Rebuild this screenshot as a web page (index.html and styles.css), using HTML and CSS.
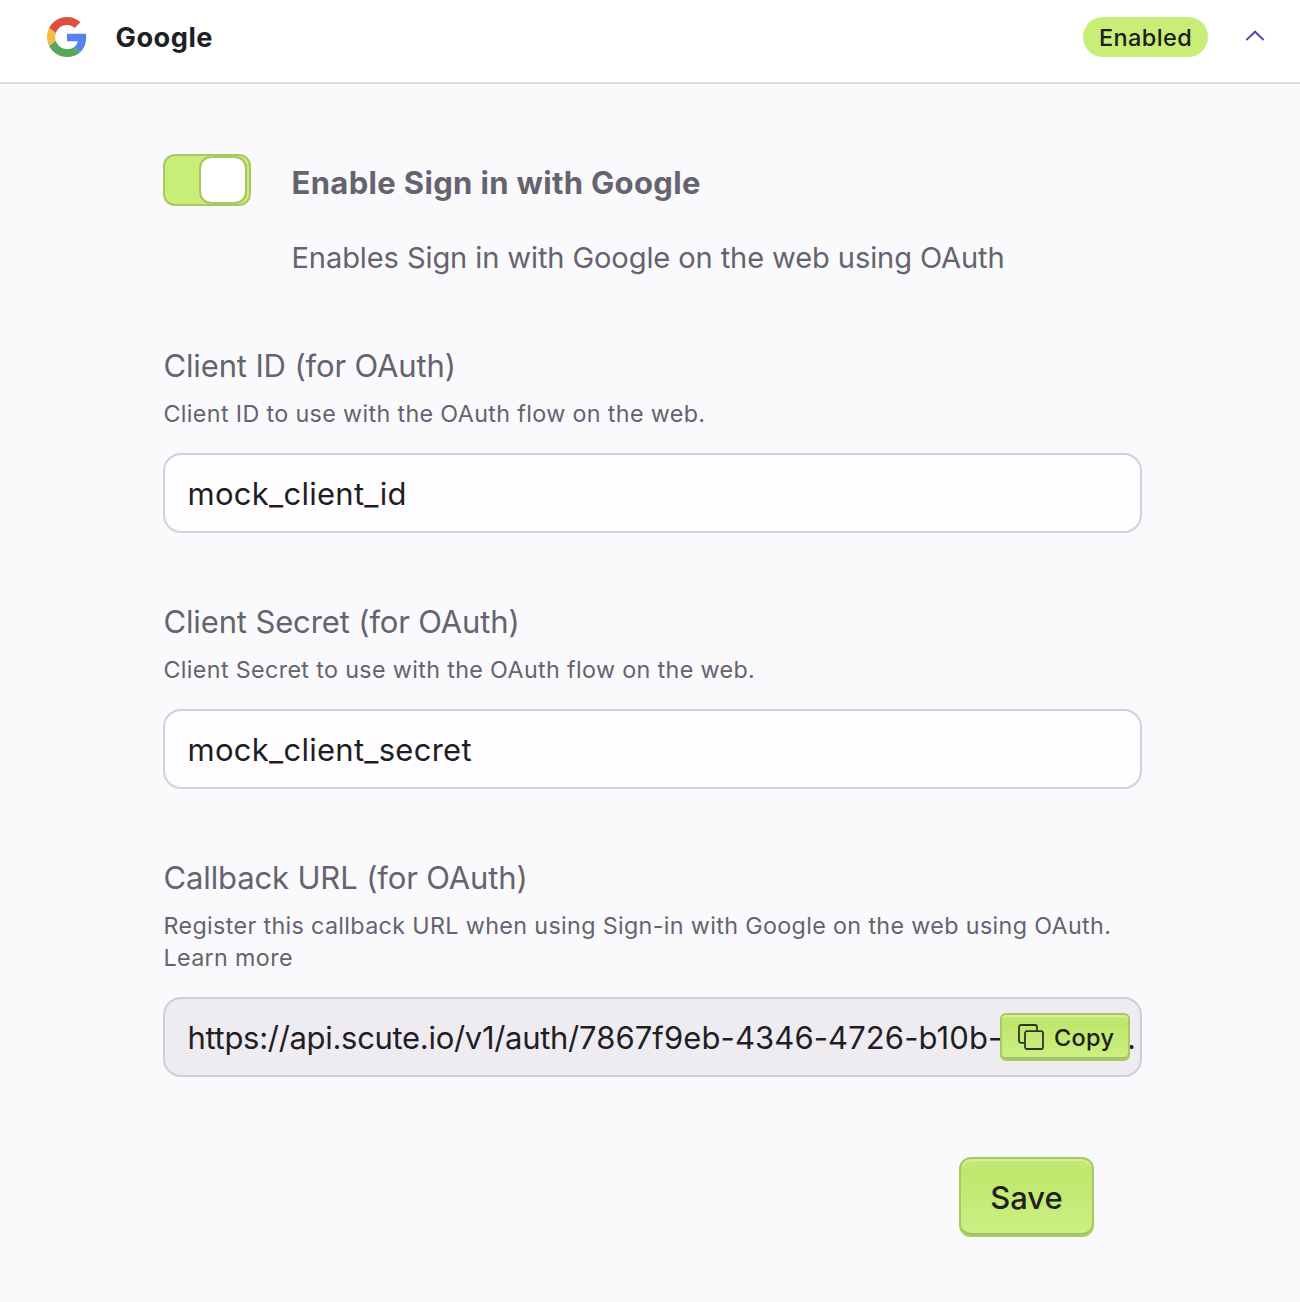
FILE: index.html
```html
<!DOCTYPE html>
<html lang="en">
<head>
<meta charset="utf-8">
<title>Google sign in settings</title>
<link rel="stylesheet" href="styles.css">
</head>
<body>
<header class="header">
  <svg class="logo" viewBox="0 0 48 48" aria-hidden="true">
    <path fill="#db5040" d="M24 9.5c3.54 0 6.71 1.22 9.21 3.6l6.85-6.85C35.9 2.38 30.47 0 24 0 14.62 0 6.51 5.38 2.56 13.22l7.98 6.19C12.43 13.72 17.74 9.5 24 9.5z"/>
    <path fill="#5384ee" d="M46.98 24.55c0-1.57-.15-3.09-.38-4.55H24v9.02h12.94c-.58 2.96-2.26 5.48-4.78 7.18l7.73 6c4.51-4.18 7.09-10.36 7.09-17.65z"/>
    <path fill="#f2bd42" d="M10.53 28.59c-.48-1.45-.76-2.99-.76-4.59s.27-3.14.76-4.59l-7.98-6.19C.92 16.46 0 20.12 0 24c0 3.88.92 7.54 2.56 10.78l7.97-6.19z"/>
    <path fill="#58a55c" d="M24 48c6.48 0 11.93-2.13 15.89-5.81l-7.73-6c-2.15 1.45-4.92 2.3-8.16 2.3-6.26 0-11.57-4.22-13.47-9.91l-7.98 6.19C6.51 42.62 14.62 48 24 48z"/>
  </svg>
  <h1 class="provider">Google</h1>
  <span class="badge">Enabled</span>
  <svg class="chevron" viewBox="0 0 20 12" aria-hidden="true"><path d="M1.400 10 10 1.700l8.600 8.300"/></svg>
</header>
<main class="form">
  <div class="enable">
    <span class="switch"><span class="thumb"></span></span>
    <div class="enable-text">
      <h2 class="enable-title">Enable Sign in with Google</h2>
      <p class="enable-desc">Enables Sign in with Google on the web using OAuth</p>
    </div>
  </div>
  <section class="field">
    <div class="label">Client ID (for OAuth)</div>
    <p class="hint">Client ID to use with the OAuth flow on the web.</p>
    <div class="input"><span class="value">mock_client_id</span></div>
  </section>
  <section class="field">
    <div class="label">Client Secret (for OAuth)</div>
    <p class="hint">Client Secret to use with the OAuth flow on the web.</p>
    <div class="input"><span class="value">mock_client_secret</span></div>
  </section>
  <section class="field">
    <div class="label">Callback URL (for OAuth)</div>
    <p class="hint">Register this callback URL when using Sign-in with Google on the web using OAuth.<br>Learn more</p>
    <div class="input readonly">
      <span class="url"><span class="url-base">https://api.scute.io/v1/auth/</span>7867f9eb-4346-4726-b10b-</span>
      <button class="button copy" type="button">
        <svg class="copy-icon" viewBox="0 0 26 26" aria-hidden="true"><path d="M6.500 18.800H3a2 2 0 0 1-2-2V3a2 2 0 0 1 2-2h14a2 2 0 0 1 2 2v3.500"/><rect x="7" y="7.200" width="18" height="17.800" rx="2"/></svg>
        <span>Copy</span>
      </button>
      <span class="tail">.</span>
    </div>
  </section>
  <div class="actions"><button class="button save" type="button">Save</button></div>
</main>
</body>
</html>
```

FILE: styles.css
```css
* { box-sizing: border-box; margin: 0; padding: 0; }
body {
  background: #fafafd;
  color: #1f1e25;
  font-family: Inter, "Liberation Sans", sans-serif;
  font-size: 31px;
  min-height: 1302px;
}
.header {
  display: flex;
  align-items: center;
  height: 84px;
  padding: 0 35px 8px 47px;
  background: #fff;
  border-bottom: 2px solid #dadae1;
}
.logo { width: 40px; height: 40px; }
.provider { margin: 1px 0 0 28.500px; font-size: 27.200px; line-height: 40px; font-weight: 700; letter-spacing: 0.5px; }
.badge {
  display: flex;
  justify-content: center;
  width: 125px;
  height: 40px;
  margin-left: auto;
  border-radius: 20px;
  background: #c8ee77;
  color: #1c2018;
  font-size: 23.500px;
  font-weight: 450;
  line-height: 41px;
  letter-spacing: 0.4px;
}
.chevron { width: 20px; height: 12px; margin: 0 0 3px 37px; fill: none; stroke: #5a47b8; stroke-width: 2; }
.form { width: 979px; margin-left: 163px; padding-top: 70px; }
.enable { display: flex; gap: 40.500px; height: 192px; color: #65636d; }
.switch {
  display: flex;
  justify-content: flex-end;
  flex: none;
  width: 88px;
  height: 52px;
  padding-right: 2px;
  border: 2px solid #a8c864;
  border-radius: 12px;
  background: #c8ee77;
}
.thumb {
  width: 48px;
  height: 48px;
  border: 2px solid #a8c864;
  border-radius: 12px;
  background: #fff;
  background-clip: padding-box;
}
.enable-title { margin-top: 9px; font-size: 31px; font-weight: 700; line-height: 40px; letter-spacing: 0.34px; white-space: nowrap; }
.enable-desc { margin-top: 35px; font-size: 29.100px; line-height: 40px; letter-spacing: -0.12px; white-space: nowrap; }
.field { padding-bottom: 69px; }
.label { padding-left: 0.5px; color: #65636d; line-height: 40px; letter-spacing: -0.14px; }
.hint { margin: 12px 0 23px 0.5px; color: #65636d; font-size: 23.300px; line-height: 32px; letter-spacing: 0.35px; white-space: nowrap; }
.input {
  display: flex;
  align-items: center;
  position: relative;
  height: 80px;
  padding: 0 22px 0 22.500px;
  border: 2px solid #d2d1da;
  border-radius: 18px;
  background: #fffdff;
  white-space: nowrap;
}
.value { letter-spacing: 0.27px; }
.url { letter-spacing: 0.1px; }
.url-base { letter-spacing: -0.31px; }
.readonly { padding-right: 4px; border-color: #d0cdd7; background: #eeecf1; }
.button {
  border: 2px solid #a8c95f;
  background: linear-gradient(#c4ea7b, #bfe76c 20%, #cdf084);
  color: #1f211d;
  font-family: inherit;
  font-weight: 450;
}
.copy {
  display: flex;
  align-items: center;
  position: absolute;
  right: 10px;
  top: 14px;
  width: 130px;
  height: 48px;
  padding: 0 0 0 16px;
  gap: 10px;
  border-radius: 6px;
  box-shadow: inset 0 2px #d4f095, inset 0 -2px #a3c168;
  font-size: 23.500px;
  letter-spacing: 0.3px;
}
.copy-icon { width: 26px; height: 26px; fill: none; stroke: #2e3524; stroke-width: 1.8; }
.tail { margin-left: auto; }
.actions { display: flex; justify-content: flex-end; padding: 11px 48px 0 0; }
.save {
  width: 135px;
  height: 80px;
  border-radius: 12px;
  box-shadow: inset 0 2px #d4f095, inset 0 -2px #a0c067;
  font-size: 31px;
}
```
